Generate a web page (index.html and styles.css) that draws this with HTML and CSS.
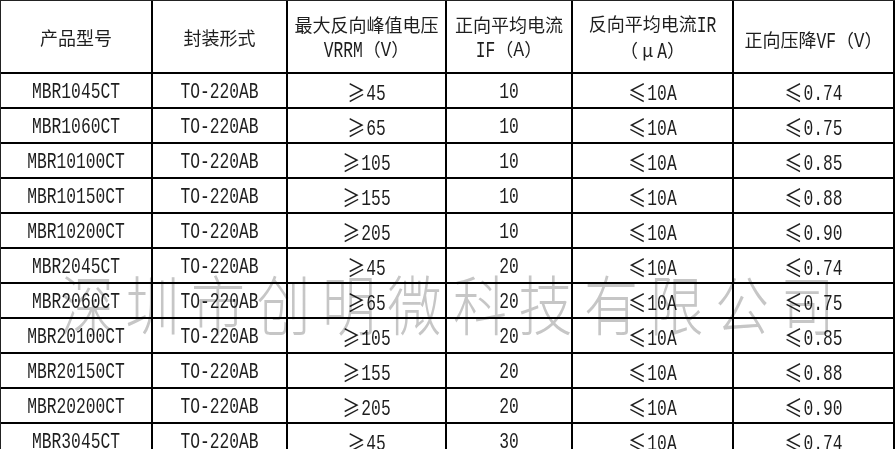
FILE: index.html
```html
<!DOCTYPE html>
<html lang="zh-CN">
<head>
<meta charset="utf-8">
<title>MBR 肖特基二极管参数表</title>
<link rel="stylesheet" href="styles.css">
</head>
<body>
<div class="page">
  <div class="sheet">
    <div class="cell head"><span>产品型号</span></div>
    <div class="cell head"><span>封装形式</span></div>
    <div class="cell head"><span>最大反向峰值电压</span><span><span class="val lat">VRRM</span>（V）</span></div>
    <div class="cell head"><span>正向平均电流</span><span><span class="val lat">IF</span>（A）</span></div>
    <div class="cell head"><span>反向平均电流<span class="val lat">IR</span></span><span>（<span class="mu">μ</span><span class="val lat">A</span>）</span></div>
    <div class="cell head head-low"><span>正向压降<span class="val lat">VF</span>（V）</span></div>

    <div class="cell"><span class="val lat">MBR1045CT</span></div>
    <div class="cell"><span class="val lat">TO-220AB</span></div>
    <div class="cell"><span class="val"><span class="cmp">≥</span><span class="lat">45</span></span></div>
    <div class="cell"><span class="val lat">10</span></div>
    <div class="cell"><span class="val"><span class="cmp">≤</span><span class="lat">10A</span></span></div>
    <div class="cell"><span class="val"><span class="cmp">≤</span><span class="lat">0.74</span></span></div>

    <div class="cell"><span class="val lat">MBR1060CT</span></div>
    <div class="cell"><span class="val lat">TO-220AB</span></div>
    <div class="cell"><span class="val"><span class="cmp">≥</span><span class="lat">65</span></span></div>
    <div class="cell"><span class="val lat">10</span></div>
    <div class="cell"><span class="val"><span class="cmp">≤</span><span class="lat">10A</span></span></div>
    <div class="cell"><span class="val"><span class="cmp">≤</span><span class="lat">0.75</span></span></div>

    <div class="cell"><span class="val lat">MBR10100CT</span></div>
    <div class="cell"><span class="val lat">TO-220AB</span></div>
    <div class="cell"><span class="val"><span class="cmp">≥</span><span class="lat">105</span></span></div>
    <div class="cell"><span class="val lat">10</span></div>
    <div class="cell"><span class="val"><span class="cmp">≤</span><span class="lat">10A</span></span></div>
    <div class="cell"><span class="val"><span class="cmp">≤</span><span class="lat">0.85</span></span></div>

    <div class="cell"><span class="val lat">MBR10150CT</span></div>
    <div class="cell"><span class="val lat">TO-220AB</span></div>
    <div class="cell"><span class="val"><span class="cmp">≥</span><span class="lat">155</span></span></div>
    <div class="cell"><span class="val lat">10</span></div>
    <div class="cell"><span class="val"><span class="cmp">≤</span><span class="lat">10A</span></span></div>
    <div class="cell"><span class="val"><span class="cmp">≤</span><span class="lat">0.88</span></span></div>

    <div class="cell"><span class="val lat">MBR10200CT</span></div>
    <div class="cell"><span class="val lat">TO-220AB</span></div>
    <div class="cell"><span class="val"><span class="cmp">≥</span><span class="lat">205</span></span></div>
    <div class="cell"><span class="val lat">10</span></div>
    <div class="cell"><span class="val"><span class="cmp">≤</span><span class="lat">10A</span></span></div>
    <div class="cell"><span class="val"><span class="cmp">≤</span><span class="lat">0.90</span></span></div>

    <div class="cell"><span class="val lat">MBR2045CT</span></div>
    <div class="cell"><span class="val lat">TO-220AB</span></div>
    <div class="cell"><span class="val"><span class="cmp">≥</span><span class="lat">45</span></span></div>
    <div class="cell"><span class="val lat">20</span></div>
    <div class="cell"><span class="val"><span class="cmp">≤</span><span class="lat">10A</span></span></div>
    <div class="cell"><span class="val"><span class="cmp">≤</span><span class="lat">0.74</span></span></div>

    <div class="cell"><span class="val lat">MBR2060CT</span></div>
    <div class="cell"><span class="val lat">TO-220AB</span></div>
    <div class="cell"><span class="val"><span class="cmp">≥</span><span class="lat">65</span></span></div>
    <div class="cell"><span class="val lat">20</span></div>
    <div class="cell"><span class="val"><span class="cmp">≤</span><span class="lat">10A</span></span></div>
    <div class="cell"><span class="val"><span class="cmp">≤</span><span class="lat">0.75</span></span></div>

    <div class="cell"><span class="val lat">MBR20100CT</span></div>
    <div class="cell"><span class="val lat">TO-220AB</span></div>
    <div class="cell"><span class="val"><span class="cmp">≥</span><span class="lat">105</span></span></div>
    <div class="cell"><span class="val lat">20</span></div>
    <div class="cell"><span class="val"><span class="cmp">≤</span><span class="lat">10A</span></span></div>
    <div class="cell"><span class="val"><span class="cmp">≤</span><span class="lat">0.85</span></span></div>

    <div class="cell"><span class="val lat">MBR20150CT</span></div>
    <div class="cell"><span class="val lat">TO-220AB</span></div>
    <div class="cell"><span class="val"><span class="cmp">≥</span><span class="lat">155</span></span></div>
    <div class="cell"><span class="val lat">20</span></div>
    <div class="cell"><span class="val"><span class="cmp">≤</span><span class="lat">10A</span></span></div>
    <div class="cell"><span class="val"><span class="cmp">≤</span><span class="lat">0.88</span></span></div>

    <div class="cell"><span class="val lat">MBR20200CT</span></div>
    <div class="cell"><span class="val lat">TO-220AB</span></div>
    <div class="cell"><span class="val"><span class="cmp">≥</span><span class="lat">205</span></span></div>
    <div class="cell"><span class="val lat">20</span></div>
    <div class="cell"><span class="val"><span class="cmp">≤</span><span class="lat">10A</span></span></div>
    <div class="cell"><span class="val"><span class="cmp">≤</span><span class="lat">0.90</span></span></div>

    <div class="cell"><span class="val lat">MBR3045CT</span></div>
    <div class="cell"><span class="val lat">TO-220AB</span></div>
    <div class="cell"><span class="val"><span class="cmp">≥</span><span class="lat">45</span></span></div>
    <div class="cell"><span class="val lat">30</span></div>
    <div class="cell"><span class="val"><span class="cmp">≤</span><span class="lat">10A</span></span></div>
    <div class="cell"><span class="val"><span class="cmp">≤</span><span class="lat">0.74</span></span></div>
  </div>
  <div class="watermark">深圳市创明微科技有限公司</div>
</div>
</body>
</html>
```

FILE: styles.css
```css
html, body {
  margin: 0;
  padding: 0;
  background: #fff;
  overflow: hidden;
}

.page {
  position: relative;
  width: 896px;
  height: 449px;
  overflow: hidden;
  font-family: "Noto Sans CJK SC", sans-serif;
  color: #1e1e1e;
}

.sheet {
  display: grid;
  grid-template-columns: 152px 135px 159px 126px 161px 161px;
  grid-template-rows: 73px;
  grid-auto-rows: 35px;
  width: max-content;
  border-top: 1px solid #222;
  border-left: 1px solid #222;
}

.cell {
  box-sizing: border-box;
  border-right: 2px solid #000;
  border-bottom: 2px solid #000;
  display: flex;
  align-items: center;
  justify-content: center;
  text-align: center;
  padding-top: 4px;
  white-space: nowrap;
}

.head {
  flex-direction: column;
  font-size: 18px;
  line-height: 24px;
  padding-top: 0;
}

.head-low {
  padding-top: 6px;
}

.mu {
  padding: 0 4px;
}

.lat {
  font-family: "Liberation Mono", "DejaVu Sans Mono", monospace;
  font-size: 16.3px;
}

.val {
  display: inline-block;
  line-height: 20px;
  transform: scaleY(1.3);
}

.cmp {
  font-family: "Noto Sans CJK SC", sans-serif;
  font-size: 18px;
  line-height: 0;
  vertical-align: -2px;
  margin-right: 1px;
}

.watermark {
  position: absolute;
  left: 60px;
  top: 276px;
  font-size: 54px;
  line-height: 54px;
  letter-spacing: 11.5px;
  font-weight: 300;
  color: #c6c6c6;
  white-space: nowrap;
  mix-blend-mode: multiply;
  transform: scaleY(1.2);
  transform-origin: 0 30px;
  pointer-events: none;
}
```
